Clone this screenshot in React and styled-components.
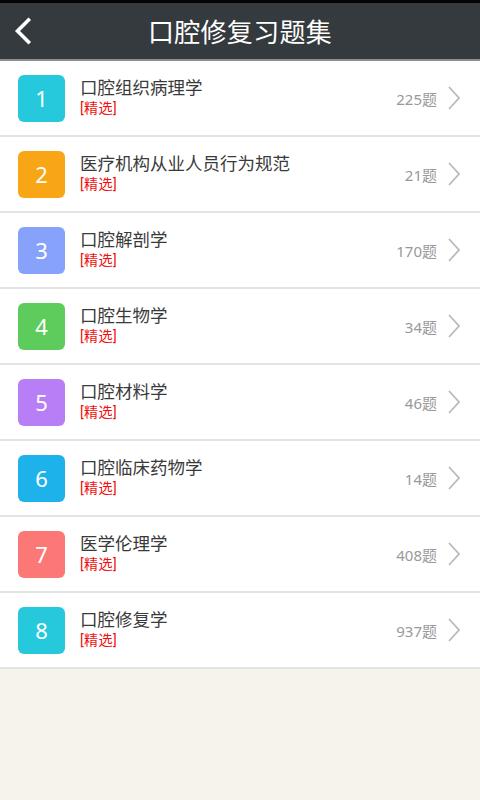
import React from 'react'
import styled, { createGlobalStyle } from 'styled-components'

const subjects = [
  { name: '口腔组织病理学', count: 225, color: '#26c9dc' },
  { name: '医疗机构从业人员行为规范', count: 21, color: '#f8a615' },
  { name: '口腔解剖学', count: 170, color: '#86a2fb' },
  { name: '口腔生物学', count: 34, color: '#5dcc5c' },
  { name: '口腔材料学', count: 46, color: '#b87ef5' },
  { name: '口腔临床药物学', count: 14, color: '#1db3ea' },
  { name: '医学伦理学', count: 408, color: '#fb7877' },
  { name: '口腔修复学', count: 937, color: '#26c9dc' },
]

function App() {
  return (
    <>
      <GlobalStyle />
      <Page>
        <Header>
          <BackButton>
            <svg width="20" height="28" viewBox="0 0 20 28">
              <path d="M15.5 3 L4.5 14 L15.5 25" fill="none" stroke="#fff" strokeWidth="3.6" strokeLinecap="square" />
            </svg>
          </BackButton>
          <Title>口腔修复习题集</Title>
        </Header>
        <List>
          {subjects.map((s, idx) => (
            <Row key={s.name}>
              <Badge color={s.color}>{idx + 1}</Badge>
              <Info>
                <Name>{s.name}</Name>
                <Tag>[精选]</Tag>
              </Info>
              <Count>{s.count}题</Count>
              <Chevron>
                <svg width="14" height="26" viewBox="0 0 14 26">
                  <path d="M2 2 L12 13 L2 24" fill="none" stroke="#b9b9b9" strokeWidth="1.8" />
                </svg>
              </Chevron>
            </Row>
          ))}
        </List>
      </Page>
    </>
  )
}

const GlobalStyle = createGlobalStyle`
  html, body {
    margin: 0;
    padding: 0;
    background: #f6f3ec;
  }
  body {
    font-family: "Noto Sans", "Noto Sans CJK SC", sans-serif;
  }
`

const Page = styled.div`
  min-height: 800px;
  background: #f6f3ec;
`

const Header = styled.div`
  position: relative;
  height: 56px;
  border-top: 3px solid #050505;
  border-bottom: 2px solid #8d9091;
  background: #343a3d;
  display: flex;
  align-items: center;
  justify-content: center;
`

const BackButton = styled.div`
  position: absolute;
  left: 13px;
  top: 14px;
  width: 20px;
  height: 28px;
  display: flex;
`

const Title = styled.h1`
  margin: 0;
  color: #fff;
  font-size: 26px;
  font-weight: 400;
  letter-spacing: 0.3px;
`

const List = styled.div`
  background: #fff;
`

const Row = styled.div`
  height: 74px;
  border-bottom: 2px solid #e4e4e4;
  display: flex;
  align-items: center;
  padding: 0 19px 0 18px;
`

const Badge = styled.div`
  width: 47px;
  height: 47px;
  border-radius: 6px;
  background: ${p => p.color};
  color: #fff;
  font-size: 22px;
  display: flex;
  align-items: center;
  justify-content: center;
  flex-shrink: 0;
`

const Info = styled.div`
  flex: 1;
  margin-left: 15px;
  display: flex;
  flex-direction: column;
  margin-top: -2px;
  font-family: Roboto, "Noto Sans CJK SC", sans-serif;
`

const Name = styled.div`
  font-size: 17.5px;
  color: #3a3a3a;
  line-height: 21px;
`

const Tag = styled.div`
  font-size: 14px;
  color: #f01010;
  line-height: 18px;
  letter-spacing: 0.4px;
`

const Count = styled.div`
  font-size: 15px;
  color: #999;
  margin-right: 10px;
`

const Chevron = styled.div`
  display: flex;
  width: 14px;
  height: 26px;
`

export default App
